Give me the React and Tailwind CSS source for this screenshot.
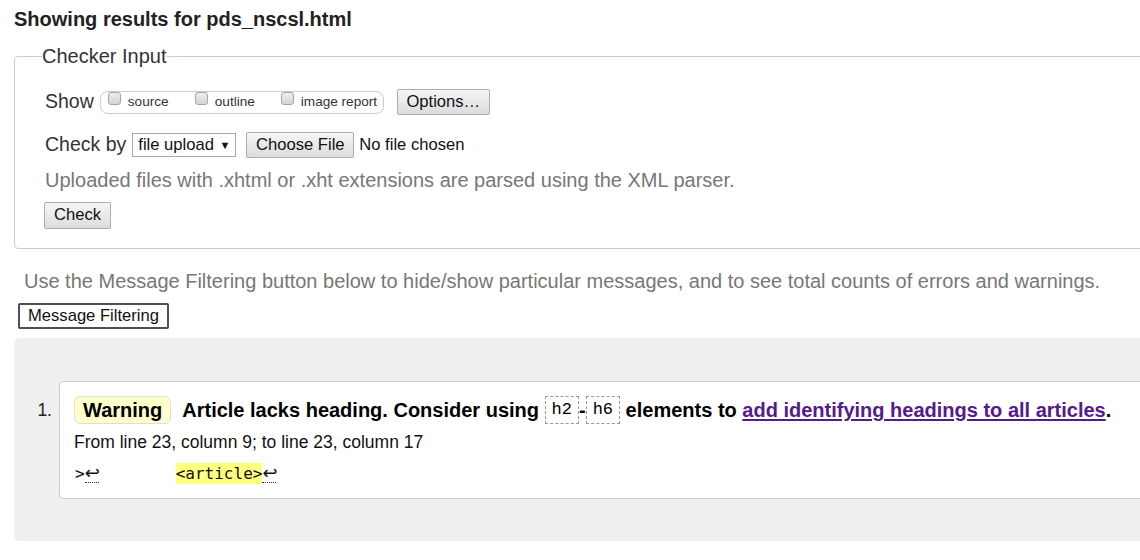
import React from 'react';

const sans = { fontFamily: '"Liberation Sans", Arial, sans-serif' };
const btn =
  'inline-flex items-center justify-center border border-[#adadad] rounded-[2px] bg-gradient-to-b from-[#f6f6f6] to-[#dcdcdc] text-[16.6px] text-[#111]';

function Box({ label, w }) {
  return (
    <span className={`inline-flex items-center gap-[7px] ${w}`}>
      <span className="w-[13px] h-[13px] -mt-[7px] rounded-[3px] border border-[#a5a5a5] bg-gradient-to-b from-[#eee] to-[#d4d4d4]" />
      <span className="text-[13.6px] text-[#333] mt-[1px]">{label}</span>
    </span>
  );
}

function Code({ children }) {
  return (
    <span className="inline-flex items-center h-[28px] px-[6px] border border-dashed border-[#999] font-['Liberation_Mono',monospace] font-normal text-[17px]">
      {children}
    </span>
  );
}

export default function App() {
  return (
    <div className="w-[1140px] h-[560px] overflow-hidden bg-white text-[#222]" style={sans}>
      <div className="h-[45px] pt-[7px] pl-[14px] text-[20px] leading-[24px] font-bold">
        Showing results for pds_nscsl.html
      </div>

      <fieldset className="ml-[14px] w-[1200px] border border-[#ccc] rounded-[4px] pl-[30px] pb-[19px]">
        <legend className="-ml-[3px] px-[0px] text-[20px] leading-[22px] text-[#333]">Checker Input</legend>

        <div className="mt-[22px] h-[26px] flex items-center">
          <span className="text-[19.5px] text-[#333] mr-[6px]">Show</span>
          <span className="flex items-center h-[23px] w-[284px] pl-[7px] border border-[#ccc] rounded-[8px]">
            <Box label="source" w="w-[87px]" />
            <Box label="outline" w="w-[86px]" />
            <Box label="image report" w="" />
          </span>
          <button className={`${btn} ml-[13px] h-[26px] w-[93px]`}>Options…</button>
        </div>

        <div className="mt-[17px] h-[26px] flex items-center">
          <span className="text-[19.5px] text-[#333] mr-[6px]">Check by</span>
          <span className="flex items-center justify-between h-[24px] w-[104px] border border-[#a9a9a9] bg-white pl-[5px] pr-[5px] text-[16.6px] text-[#111]">
            file upload <span className="text-[11px]">▼</span>
          </span>
          <button className={`${btn} ml-[10px] h-[26px] w-[108px]`}>Choose File</button>
          <span className="ml-[5px] text-[16.6px] text-[#111]">No file chosen</span>
        </div>

        <div className="mt-[11px] h-[22px] flex items-center text-[20px] text-[#777]">
          Uploaded files with .xhtml or .xht extensions are parsed using the XML parser.
        </div>

        <div className="mt-[11px] h-[27px] flex -ml-[1px]">
          <button className={`${btn} h-[27px] w-[67px]`}>Check</button>
        </div>
      </fieldset>

      <div className="mt-[21px] pl-[24px] h-[22px] flex items-center text-[20px] text-[#777] whitespace-nowrap">
        Use the Message Filtering button below to hide/show particular messages, and to see total counts of errors and warnings.
      </div>
      <div className="mt-[11px] pl-[18px] h-[26px] flex">
        <button className="h-[26px] w-[151px] border-2 border-[#4b505c] rounded-[2px] bg-white text-[16.6px] text-[#111] flex items-center justify-center">
          Message Filtering
        </button>
      </div>

      <div className="mt-[9px] ml-[14px] w-[1200px] bg-[#efefef] rounded-[6px] pt-[43px] pb-[42px] flex">
        <div className="w-[45px] pr-[7px] text-[17.5px] h-[58px] flex items-center justify-end">1.</div>
        <div className="flex-1 bg-white border border-[#ccc] rounded-[4px] pl-[14px] pt-[14px] pb-[10px]">
          <div className="h-[28px] flex items-center text-[20px] font-bold text-black whitespace-pre">
            <span className="h-[28px] flex items-center px-[8px] bg-[#ffffcc] border border-[#ddd] rounded-[6px] mr-[11px]">
              Warning
            </span>
            Article lacks heading. Consider using <Code>h2</Code>-<Code>h6</Code> elements to{' '}
            <a href="#" className="text-[#551a8b] underline decoration-2 underline-offset-2">
              add identifying headings to all articles
            </a>
            .
          </div>
          <div className="h-[36px] flex items-center text-[17.5px] text-[#111]">
            From line 23, column 9; to line 23, column 17
          </div>
          <div className="h-[28px] leading-[28px] pl-[1px] font-['DejaVu_Sans_Mono',monospace] text-[16px] text-[#111] whitespace-pre">
            {'>'}
            <span className="inline-block w-[14px] text-center leading-[18px] border-b border-dotted border-[#333] font-['DejaVu_Sans',sans-serif] text-[18px]">↩</span>
            {'        '}
            <span className="bg-[#ffff80] py-[1px]">{'<article>'}</span>
            <span className="inline-block w-[14px] text-center leading-[18px] border-b border-dotted border-[#333] font-['DejaVu_Sans',sans-serif] text-[18px]">↩</span>
          </div>
        </div>
      </div>
    </div>
  );
}
